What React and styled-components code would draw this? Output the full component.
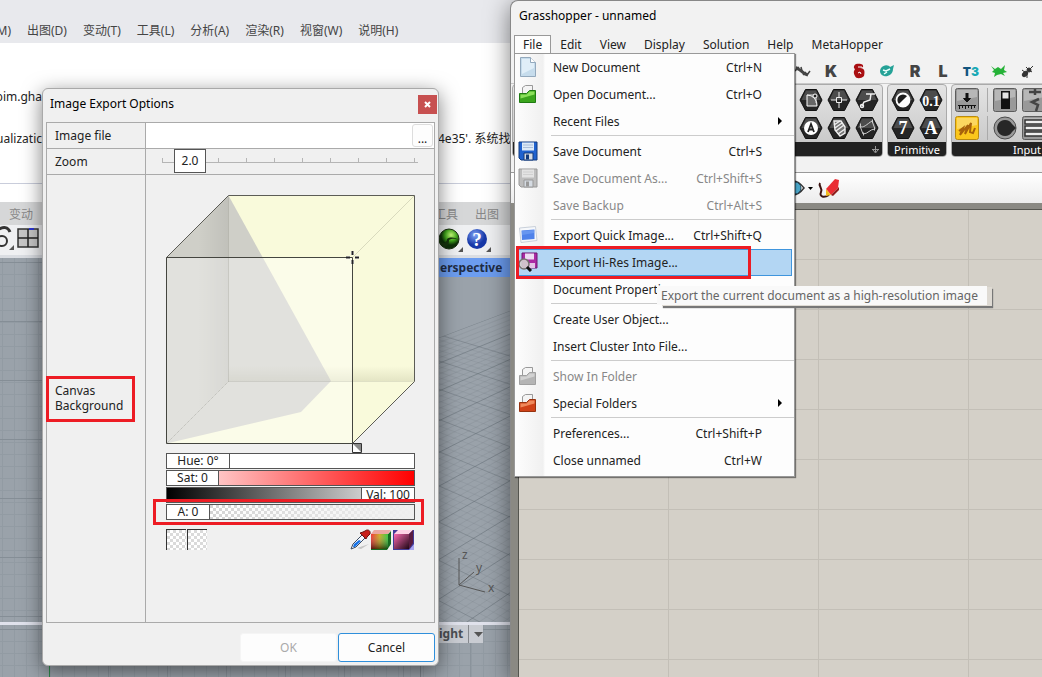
import styled, { createGlobalStyle, css } from "styled-components";

const fileMenu = [
  [
    { label: "New Document", keys: "Ctrl+N", icon: "page" },
    { label: "Open Document...", keys: "Ctrl+O", icon: "green" },
    { label: "Recent Files", sub: true },
  ],
  [
    { label: "Save Document", keys: "Ctrl+S", icon: "save" },
    { label: "Save Document As...", keys: "Ctrl+Shift+S", icon: "saveGray", off: true },
    { label: "Save Backup", keys: "Ctrl+Alt+S", off: true },
  ],
  [
    { label: "Export Quick Image...", keys: "Ctrl+Shift+Q", icon: "quick" },
    { label: "Export Hi-Res Image...", icon: "hires", active: true },
    { label: "Document Properties..." },
  ],
  [{ label: "Create User Object..." }, { label: "Insert Cluster Into File..." }],
  [
    { label: "Show In Folder", icon: "gray", off: true },
    { label: "Special Folders", icon: "orange", sub: true },
  ],
  [
    { label: "Preferences...", keys: "Ctrl+Shift+P" },
    { label: "Close unnamed", keys: "Ctrl+W" },
  ],
];

const folderColors = {
  green: ["#8be05a", "#3ba51d", "#1f7a12"],
  gray: ["#d2d2d2", "#b4b4b4", "#a0a0a0"],
  orange: ["#ef8a5c", "#cf4218", "#96320f"],
};

const Floppy = ({ main, dark, plate }) => (
  <g>
    <path d="M1 1h18v18H3l-2-2z" fill={main} stroke={dark} />
    <path d="M4 1.500h12v8H4z" fill={plate} />
    <path d="M5 4h10M5 6.500h10" stroke={dark} strokeOpacity=".25" />
    <path d="M6 12h9v7H6z" fill="#d5dbe2" stroke={dark} />
    <path d="M8 13.500h3v5H8z" fill={dark} />
  </g>
);

const MenuIcon = ({ name }) => {
  if (name === "page") {
    return (
      <svg width="20" height="20" viewBox="0 0 20 20">
        <path d="M2.500.5h10l5 5v14h-15z" fill="#c6dcec" stroke="#93a9bd" />
        <path d="M4 2h8v4h4v5L4 17z" fill="#e0eef8" />
        <path d="M12.500.5v5h5" fill="#fff" stroke="#93a9bd" />
      </svg>
    );
  }
  if (name === "save" || name === "saveGray") {
    return (
      <svg width="20" height="20" viewBox="0 0 20 20">
        {name === "save" ? (
          <Floppy main="#1f62cf" dark="#123a7c" plate="#dceaf8" />
        ) : (
          <Floppy main="#bdbdbd" dark="#999" plate="#e3e3e3" />
        )}
      </svg>
    );
  }
  if (name === "quick") {
    return (
      <svg width="20" height="20" viewBox="0 0 20 20">
        <path d="M1.500 3l16-1.500 1.500 14-16 2z" fill="#f6f8fb" stroke="#c9d0da" strokeLinejoin="round" />
        <path d="M3.500 5.500l13-1v9.500l-12.500 1z" fill="#4f82ea" />
        <path d="M4 6l12-1v3L4 10z" fill="#6796f0" />
      </svg>
    );
  }
  if (name === "hires") {
    return (
      <svg width="20" height="20" viewBox="0 0 20 20">
        <path d="M4 1h15v15H6l-2-2z" fill="#ab2aa4" stroke="#6d1770" />
        <path d="M7 1.500h9v6H7z" fill="#eedcf2" />
        <path d="M10 11h7v5h-7z" fill="#e4c3e6" />
        <circle cx="6" cy="12" r="5" fill="#d5d2cf" fillOpacity=".9" stroke="#77716f" strokeWidth="1.500" />
        <path d="M9 15l4 4" stroke="#111" strokeWidth="3" />
      </svg>
    );
  }
  const [light, base, edge] = folderColors[name];
  return (
    <svg width="20" height="20" viewBox="0 0 20 20">
      <path d="M4.500 9V3.500l3-2h7v8" fill="#f4f4f4" stroke="#999" />
      <path d="M1.500 9.500h7l3-3h6v12h-16z" fill={base} stroke={edge} />
      <path d="M2.500 10.500h6l3-3h5v3l-14 4z" fill={light} />
    </svg>
  );
};

const CubePicker = () => (
  <Cube viewBox="160 188 262 266" aria-label="Colour cube">
    <defs>
      <linearGradient id="floorShade" x1="0" y1="0" x2="0" y2="1">
        <stop offset="0" stopColor="#77774f" stopOpacity="0" />
        <stop offset="1" stopColor="#77774f" stopOpacity=".16" />
      </linearGradient>
      <linearGradient id="wallShade" x1="0" y1="0" x2="1" y2="0">
        <stop offset="0" stopColor="#000" stopOpacity="0" />
        <stop offset="1" stopColor="#000" stopOpacity=".07" />
      </linearGradient>
    </defs>
    <path d="M228.500 195.500H414.500V381.500L352.500 443.500H166.500V257.500Z" fill="#f9fadb" />
    <path d="M228.500 195.500L331 381L301 412L166.500 443.500V257.500Z" fill="#cfcfc8" />
    <path d="M228.500 366H414.500V381H228.500Z" fill="url(#floorShade)" />
    <path d="M198 226L228.500 195.500V381L198 411Z" fill="url(#wallShade)" />
    <path d="M166.500 257.500H352.500V443.500H166.500Z" fill="#fff" fillOpacity=".38" />
    <path d="M228.500 195.500V381.500H414.500M228.500 381.500L166.500 443.500" fill="none" stroke="#77776d" strokeOpacity=".4" strokeDasharray="1 1" />
    <path d="M414.500 195.500L352.500 257.500" stroke="#d9dabd" />
    <path d="M166.500 257.500L228.500 195.500H414.500V381.500L352.500 443.500" fill="none" stroke="#5c5c56" />
    <path d="M166.500 257.500H352.500V443.500H166.500Z" fill="none" stroke="#44453f" />
    <path d="M352.500 251v4M352.500 260v4M346 257.500h4M355 257.500h4" stroke="#fff" strokeWidth="3" />
    <path d="M352.500 251v4M352.500 260v4M346 257.500h4M355 257.500h4" stroke="#222" strokeWidth="2" />
    <path d="M352.500 443.500h9v9h-9z" fill="#fff" stroke="#333" />
    <path d="M353 444h8v8z" fill="#8a8a8a" />
  </Cube>
);

const ColorTools = () => (
  <svg width="66" height="22" viewBox="0 0 66 22">
    <defs>
      <linearGradient id="rg" x1="0" y1="0" x2="1" y2="0">
        <stop offset="0" stopColor="#f01f1f" />
        <stop offset=".5" stopColor="#c8a410" />
        <stop offset="1" stopColor="#22c42c" />
      </linearGradient>
      <linearGradient id="darken" x1="0" y1="0" x2="0" y2="1">
        <stop offset="0" stopColor="#fff" stopOpacity=".1" />
        <stop offset="1" stopColor="#000" stopOpacity=".6" />
      </linearGradient>
      <linearGradient id="pink" x1="0" y1="0" x2="1" y2="1">
        <stop offset="0" stopColor="#f868ae" />
        <stop offset="1" stopColor="#1d0614" />
      </linearGradient>
    </defs>
    <path d="M8 19l12-4-8 5z" fill="#c4c4c4" />
    <path d="M2 20l2-5 9-9 3 3-9 9z" fill="#f3f8ff" stroke="#3c4a60" />
    <path d="M4 18l1-3 5-4 2 1-6 6z" fill="#1672e8" />
    <path d="M11 4l6 6 1-2 3-3c1-4-3-5-5-3l-2 1z" fill="#c8201c" stroke="#6d1210" />
    <path d="M39 5l3-3v13l-4 6H22v-1h17z" fill="#166c22" />
    <path d="M22 5l3-4h17l-3 4z" fill="#eba6a0" />
    <path d="M22 5h17v15H22z" fill="url(#rg)" />
    <path d="M22 5h17v15H22z" fill="url(#darken)" />
    <path d="M44 1h21v20H44z" fill="#413a97" />
    <path d="M45 5l4-4h15l-4 4z" fill="#ffd2e6" />
    <path d="M45 5h15v15H45z" fill="url(#pink)" />
    <path d="M60 5l4-4v13l-4 6z" fill="#5a1c40" />
    <path d="M65 21h-5l5-6z" fill="#a9a5f2" />
  </svg>
);

const hexGlyphs = {
  shape: (
    <g>
      <path d="M8 7v11h10a10 10 0 0 0-10-11z" fill="#666" stroke="#fff" />
      <path d="M8 7h8M17 7v8" stroke="#ddd" />
      <circle cx="16" cy="8" r="2" fill="#222" stroke="#fff" />
    </g>
  ),
  point: <path d="M12 4v5M12 15v5M4 12h5M15 12h5M9.500 9.500h5v5h-5z" fill="none" stroke="#eee" />,
  vector: (
    <g fill="none" stroke="#eee" strokeWidth="1.500">
      <path d="M7 18l2-4 6-2 1-6M11 6h9" />
      <circle cx="7" cy="18" r="1.500" />
    </g>
  ),
  letter: (
    <g>
      <circle cx="12" cy="12" r="7" fill="#fff" />
      <path d="M9 16l3-8 3 8M10 13.500h4" fill="none" stroke="#222" strokeWidth="1.800" />
    </g>
  ),
  hatch: (
    <g stroke="#eee" strokeWidth="1.400">
      <path d="M7 5h7l4 6v6l-5 3-5-6z" fill="#777" />
      <path d="M7 9l6-4M8 12l7-5M9 15l8-6M11 18l7-5" />
    </g>
  ),
  surface: (
    <g fill="none" stroke="#ccc">
      <path d="M5 10c3 3 7-2 12-5l3 8c-5 0-7 5-12 5z" />
      <path d="M5 9h1M17 5h1M19 13h1M8 18h1" strokeWidth="3" />
    </g>
  ),
  bool: (
    <g>
      <circle cx="12" cy="12" r="6.500" fill="#1d1d1d" stroke="#fff" strokeWidth="1.800" />
      <path d="M16.600 7.400a6.500 6.500 0 0 1-9.200 9.200z" fill="#fff" />
    </g>
  ),
};

const Hex = ({ glyph, text }) => (
  <IconButton type="button" aria-label={glyph || text}>
    <svg width="24" height="24" viewBox="0 0 24 24">
      <path d="M6.500 1.500h11L23 12l-5.500 10.500h-11L1 12z" fill="#252525" stroke="#111" />
      <path d="M7 2.500h10L21.500 12h-19z" fill="#4c4c4c" />
      {glyph && hexGlyphs[glyph]}
      {text && (
        <text x="12" y="18" textAnchor="middle" fontFamily="Liberation Serif, serif" fontWeight="700" fontSize={text.length > 1 ? 14 : 18} fill="#fff">
          {text}
        </text>
      )}
    </svg>
  </IconButton>
);

const Tile = ({ kind }) => (
  <IconButton type="button" aria-label={kind}>
    <svg width="24" height="24" viewBox="0 0 24 24">
      {kind !== "knob" && (
        <rect x=".5" y=".5" width="23" height="23" rx="2" fill={kind === "graph" ? "#fbc61c" : "#999"} stroke={kind === "graph" ? "#b98a10" : "#5c5c5c"} />
      )}
      {kind !== "knob" && <path d="M2 2h20v7L2 13z" fill="#fff" fillOpacity=".3" />}
      {kind === "import" && (
        <g fill="#111" stroke="#111">
          <path d="M12 5v6" strokeWidth="3" />
          <path d="M8.500 10.500h7L12 14z" />
          <path d="M3 17.500h18M4.500 17v4M7.500 17v3M10.500 17v4M13.500 17v3M16.500 17v4M19.500 17v3" />
        </g>
      )}
      {kind === "graph" && <path d="M4 15l4-3-3 7 8-10-3 9 6-11-1 9 3 1 2-5" fill="none" stroke="#a8620b" strokeWidth="2" />}
      {kind === "toggle" && (
        <g>
          <path d="M8 3h9v18H8z" fill="#111" />
          <path d="M9.500 4.500h6v6h-6z" fill="#e4e4e4" />
        </g>
      )}
      {kind === "knob" && (
        <g>
          <circle cx="12" cy="12" r="11" fill="#9a9a9a" stroke="#4c4c4c" />
          <path d="M12 4a8 8 0 1 0 7 12l4-4-4-4a8 8 0 0 0-7-4z" fill="#272727" />
        </g>
      )}
      {kind === "digits" && <path d="M7 4h12M13 1v6M17 11l-7 3 6 3-2 6" fill="none" stroke="#444" strokeWidth="2.500" />}
      {kind === "list" && <path d="M3 4h19v4H3zM3 10h19v4H3zM3 16h19v4H3z" fill="#eee" stroke="#333" strokeWidth="1.500" />}
    </svg>
  </IconButton>
);

const TabArt = ({ kind }) => (
  <svg width="18" height="18" viewBox="0 0 18 18">
    {kind === "hopper" && (
      <g fill="none" stroke="#444">
        <path d="M2 6l4 2 5 4 3 1" strokeWidth="3" />
        <path d="M1 9l4-4M7 5l1 4M9 13l3-3M13 13l3-4M2 5l3 1" strokeWidth="1.500" />
      </g>
    )}
    {kind === "kangaroo" && <path d="M6 2c4-1 8 0 7 3l-3 1c5 0 5 4 4 8-3 3-8 3-9 0-2-4-1-5 0-7-2-1-1-4 1-5z" fill="#a90f12" />}
    {kind === "kangaroo" && <path d="M8 5h4M8 11l2-1 1 2" fill="none" stroke="#fff" />}
    {kind === "teal" && <path d="M3 6c3-4 8-3 9-1l4-2-1 4c0 6-6 8-9 7-4-1-5-5-3-8z" fill="#25a297" />}
    {kind === "teal" && <path d="M5 8l3 1 4-2M6 12l3-2" fill="none" stroke="#e9fffb" strokeWidth="1.500" />}
    {kind === "lizard" && <path d="M1 4l4 3 3-2 3 2 4-4-1 5 3 2-4 1 2 3-4-2-4 1-3 2 1-4-3-1 2-2z" fill="#25b237" />}
    {kind === "ant" && (
      <g fill="#333" stroke="#333">
        <ellipse cx="7" cy="12" rx="3" ry="2" transform="rotate(-45 7 12)" />
        <circle cx="11" cy="8" r="2" />
        <path d="M11 8l4-4M8 5l3 3M14 10l-3-2M4 8l4 3M9 16V12" fill="none" />
      </g>
    )}
  </svg>
);

const PerspectiveGrid = () => {
  const lines = [];
  for (let i = 0; i < 64; i++) {
    const y = 60 + i * 5 + i * i * 0.04;
    const strong = i % 5 === 0;
    lines.push(<path key={`a${i}`} d={`M0 ${y + 4}L90 ${y - 30 - i * 0.6}`} strokeOpacity={strong ? 0.5 : 0.15} />);
    lines.push(<path key={`b${i}`} d={`M0 ${y - 5}L90 ${y + 22 + i * 0.5}`} strokeOpacity={strong ? 0.4 : 0.13} />);
  }
  return (
    <Scene viewBox="0 0 80 345" preserveAspectRatio="xMinYMin slice">
      <clipPath id="ground">
        <path d="M0 64L90 30V345H0z" />
      </clipPath>
      <g clipPath="url(#ground)" fill="none" stroke="#626b73">
        {lines}
      </g>
      <path d="M29 308V281M29 308L44 295M29 308L55 315" fill="none" stroke="#555" />
      <g fontFamily="Noto Sans, sans-serif" fontSize="12" fill="#555">
        <text x="32" y="282">z</text>
        <text x="46" y="295">y</text>
        <text x="58" y="315">x</text>
      </g>
    </Scene>
  );
};

const Rhino = () => (
  <RhinoWindow>
    <RhinoMenu>
      {["M)", "出图(D)", "变动(T)", "工具(L)", "分析(A)", "渲染(R)", "视窗(W)", "说明(H)"].map((t) => (
        <PlainButton type="button" key={t}>{t}</PlainButton>
      ))}
    </RhinoMenu>
    <Console>
      <ConsoleLine>
        <LineStart>bim.gha</LineStart>
      </ConsoleLine>
      <ConsoleLine>
        <LineStart>ualizatic</LineStart>
        <span>4e35'. 系统找</span>
      </ConsoleLine>
      <Prompt />
    </Console>
    <RhinoTabs>
      <TabStart>变动</TabStart>
      <span>工具</span>
      <span>出图</span>
    </RhinoTabs>
    <RhinoTools>
      <ToolStart>
        <svg width="42" height="28" viewBox="0 0 42 28">
          <path d="M-3 5c7-4 11-3 13 2" fill="none" stroke="#333" strokeWidth="3" />
          <circle cx="2" cy="16" r="5" fill="none" stroke="#333" strokeWidth="2" />
          <path d="M14 20v5H9z" fill="#555" />
          <path d="M18 4h20v18H18z" fill="#c6c6c6" stroke="#333" strokeWidth="1.500" />
          <path d="M28 4v18M18 13h20" stroke="#222" strokeWidth="1.500" />
          <path d="M29 4h5" stroke="#2b35d1" strokeWidth="2" />
        </svg>
      </ToolStart>
      <svg width="56" height="28" viewBox="0 0 56 28">
        <defs>
          <radialGradient id="ball" cx=".6" cy=".3">
            <stop offset="0" stopColor="#c8ff7a" />
            <stop offset=".6" stopColor="#3fa51c" />
            <stop offset="1" stopColor="#0d2f08" />
          </radialGradient>
          <radialGradient id="help" cx=".4" cy=".3">
            <stop offset="0" stopColor="#7ea3f5" />
            <stop offset="1" stopColor="#1738a8" />
          </radialGradient>
        </defs>
        <circle cx="12" cy="14" r="10" fill="url(#ball)" stroke="#1a2d12" />
        <path d="M2 15c4 5 8 3 8-1 3-2 8-2 11 1-3-2-7-1-9 0 0 5-2 7-6 7-3-2-4-4-4-7z" fill="#16330d" />
        <path d="M26 22v5h-5zM54 22v5h-5z" fill="#555" />
        <circle cx="40" cy="14" r="10" fill="url(#help)" />
        <text x="40" y="21" textAnchor="middle" fontFamily="Liberation Serif, serif" fontWeight="700" fontSize="19" fill="#fff">?</text>
      </svg>
    </RhinoTools>
    <Viewports>
      <Viewport />
      <Viewport $plain>
        <ViewTitle>erspective</ViewTitle>
        <PerspectiveGrid />
      </Viewport>
    </Viewports>
    <BottomViews>
      <Viewport><GreenAxis /></Viewport>
      <Viewport>
        <ViewTag>
          ight<i />
          <svg width="9" height="5" viewBox="0 0 9 5"><path d="M0 0h9L4.500 5z" fill="#555" /></svg>
        </ViewTag>
      </Viewport>
    </BottomViews>
  </RhinoWindow>
);

const ExportDialog = () => {
  const zoom = 2;
  return (
    <Dialog role="dialog" aria-label="Image Export Options">
      <DialogTitle>
        <span>Image Export Options</span>
        <CloseButton type="button" aria-label="Close">
          <svg width="7" height="7" viewBox="0 0 7 7"><path d="M1 1l5 5M6 1L1 6" stroke="#fff" strokeWidth="2" /></svg>
        </CloseButton>
      </DialogTitle>
      <Properties>
        <PropLabel htmlFor="imageFile">Image file</PropLabel>
        <FileCell>
          <FileInput id="imageFile" />
          <BrowseButton type="button">...</BrowseButton>
        </FileCell>
        <PropLabel htmlFor="zoom">Zoom</PropLabel>
        <ZoomCell>
          <ZoomTrack>
            <ZoomInput id="zoom" type="range" min="1" max="10" defaultValue={zoom} />
            <ZoomValue htmlFor="zoom" style={{ left: `${zoom * 6}px` }}>2.0</ZoomValue>
          </ZoomTrack>
        </ZoomCell>
        <CanvasLabel>
          <Marked>Canvas<br />Background</Marked>
        </CanvasLabel>
        <ColorCell>
          <CubePicker />
          <Channels>
            <Channel>
              <ChannelLabel htmlFor="hue" $w={62}>Hue: 0°</ChannelLabel>
              <ChannelInput id="hue" type="range" $fill="#fff" />
            </Channel>
            <Channel>
              <ChannelLabel htmlFor="sat" $w={51}>Sat: 0</ChannelLabel>
              <ChannelInput id="sat" type="range" $fill="linear-gradient(90deg, #ffc4c4, #f00)" />
            </Channel>
            <Channel $reverse>
              <ChannelLabel htmlFor="val" $w={52}>Val: 100</ChannelLabel>
              <ChannelInput id="val" type="range" $reverse $fill="linear-gradient(90deg, #000, #ccc)" />
            </Channel>
            <Channel>
              <ChannelLabel htmlFor="alpha" $w={42}>A: 0</ChannelLabel>
              <ChannelInput
                id="alpha"
                type="range"
                $fill="linear-gradient(90deg, #efefef00, #efefef), conic-gradient(#fff 25%, #d4d4d4 0 50%, #fff 0 75%, #d4d4d4 0) 0 0 / 6px 6px"
              />
              <AlphaMark />
            </Channel>
          </Channels>
          <SwatchRow>
            <Swatch type="button" aria-label="Old colour" />
            <Swatch type="button" aria-label="New colour" />
            <ColorTools />
          </SwatchRow>
        </ColorCell>
      </Properties>
      <DialogFooter>
        <DialogButton type="button" disabled>OK</DialogButton>
        <DialogButton type="button" $focus>Cancel</DialogButton>
      </DialogFooter>
    </Dialog>
  );
};

const FileMenu = () => (
  <Menu role="menu">
    {fileMenu.map((group, i) => (
      <MenuGroup key={i}>
        {group.map((item) => (
          <MenuItem type="button" role="menuitem" key={item.label} disabled={item.off} $active={item.active}>
            <Gutter>{item.icon && <MenuIcon name={item.icon} />}</Gutter>
            <span>{item.label}</span>
            <Keys>{item.keys}</Keys>
            <Arrow>
              {item.sub && <svg width="4" height="8" viewBox="0 0 4 8"><path d="M0 0l4 4-4 4z" fill="#000" /></svg>}
            </Arrow>
            {item.active && <ExportMark />}
            {item.active && <Tooltip role="tooltip">Export the current document as a high-resolution image</Tooltip>}
          </MenuItem>
        ))}
      </MenuGroup>
    ))}
  </Menu>
);

const Grasshopper = () => (
  <GhWindow>
    <GhTitle>Grasshopper - unnamed</GhTitle>
    <GhMenuBar>
      {["File", "Edit", "View", "Display", "Solution", "Help", "MetaHopper"].map((t) => (
        <GhMenuButton type="button" key={t} $open={t === "File"}>{t}</GhMenuButton>
      ))}
    </GhMenuBar>
    <TabStrip>
      <GhTab type="button" aria-label="Hopper"><TabArt kind="hopper" /></GhTab>
      <GhTab type="button">K</GhTab>
      <GhTab type="button" aria-label="Kangaroo"><TabArt kind="kangaroo" /></GhTab>
      <GhTab type="button" aria-label="Teal"><TabArt kind="teal" /></GhTab>
      <GhTab type="button">R</GhTab>
      <GhTab type="button">L</GhTab>
      <GhTab type="button" $small>T<b>3</b></GhTab>
      <GhTab type="button" aria-label="Lizard"><TabArt kind="lizard" /></GhTab>
      <GhTab type="button" aria-label="Ant"><TabArt kind="ant" /></GhTab>
    </TabStrip>
    <Ribbon>
      <Panel $w={371}>
        <PanelIcons $cols={3}>
          <Hex glyph="shape" /><Hex glyph="point" /><Hex glyph="vector" />
          <Hex glyph="letter" /><Hex glyph="hatch" /><Hex glyph="surface" />
        </PanelIcons>
        <PanelTitle $end>
          <svg width="7" height="7" viewBox="0 0 7 7"><path d="M3.500 0v6M0 3.500h7M1 4l2.500 3L6 4" stroke="#999" fill="none" /></svg>
        </PanelTitle>
      </Panel>
      <Panel $w={60}>
        <PanelIcons $cols={2}>
          <Hex glyph="bool" /><Hex text="0.1" />
          <Hex text="7" /><Hex text="A" />
        </PanelIcons>
        <PanelTitle>Primitive</PanelTitle>
      </Panel>
      <Panel $w={152}>
        <InputIcons>
          <Tile kind="import" /><i /><Tile kind="toggle" /><Tile kind="digits" />
          <Tile kind="graph" /><i /><Tile kind="knob" /><Tile kind="list" />
        </InputIcons>
        <PanelTitle>Input</PanelTitle>
      </Panel>
    </Ribbon>
    <CanvasBar>
      <svg width="56" height="24" viewBox="0 0 56 24">
        <path d="M0 12Q10-2 21 12Q10 26 0 12z" fill="#fff" stroke="#333" strokeWidth="1.500" />
        <circle cx="12" cy="12" r="6" fill="#48a3c5" stroke="#245" />
        <path d="M25 11h5l-2.500 3z" fill="#000" />
        <path d="M37 7c-2 3 3 5 1 9-2 5 3 6 8 3" fill="none" stroke="#3b120f" strokeWidth="2" />
        <path d="M43 13L52 3l4 1-1 8-7 7z" fill="#ea2c33" />
        <path d="M43 13l5 6-5 1z" fill="#f2b91d" />
        <path d="M48 19l8-8v3l-6 6z" fill="#8e1c1b" />
      </svg>
    </CanvasBar>
    <Canvas />
    <FileMenu />
  </GhWindow>
);

const App = () => (
  <Desktop>
    <GlobalStyle />
    <Rhino />
    <Grasshopper />
    <ExportDialog />
  </Desktop>
);

export default App;

const GlobalStyle = createGlobalStyle`
  * { box-sizing: border-box; }

  body {
    margin: 0;
    font-family: "Noto Sans", "Noto Sans CJK SC", sans-serif;
    font-size: 12px;
    color: #222;
  }

  button, input {
    font: inherit;
    color: inherit;
    margin: 0;
    padding: 0;
    border: 0;
  }

  svg { display: block; flex: none; }
`;

const redMark = css`
  border: 3px solid #ed1c24;
`;

const Desktop = styled.div`
  position: relative;
  min-height: 100vh;
  overflow: hidden;
`;

const RhinoWindow = styled.main`
  display: flex;
  flex-direction: column;
  min-height: 100vh;
  background: #9aa2aa;
  white-space: nowrap;
`;

const RhinoMenu = styled.nav`
  display: flex;
  align-items: flex-end;
  gap: 16px;
  height: 43px;
  padding-bottom: 3px;
  background: #e8e9ed;
  color: #444;
`;

const PlainButton = styled.button`
  background: none;
  line-height: 18px;

  &:first-child {
    width: 11px;
    display: flex;
    justify-content: flex-end;
  }
`;

const Console = styled.div`
  display: flex;
  flex-direction: column;
  gap: 22px;
  height: 159px;
  padding-top: 44px;
  background: #fff;
`;

const ConsoleLine = styled.div`
  display: flex;
  line-height: 20px;
`;

const Prompt = styled.div`
  height: 13px;
  border-bottom: 1px solid #c9cddb;
`;

const LineStart = styled.span`
  display: flex;
  justify-content: flex-end;
  width: 42px;
  margin-right: 396px;
`;

const RhinoTabs = styled.div`
  display: flex;
  gap: 17px;
  padding-left: 9px;
  height: 23px;
  align-items: center;
  background: #d6d7d8;
  color: #888;
`;

const TabStart = styled.span`
  flex: 0 0 408px;
`;

const RhinoTools = styled.div`
  display: flex;
  height: 33px;
  background: #eff0f2;
  border-bottom: 3px solid #dadde2;
`;

const ToolStart = styled.div`
  flex: 0 0 437px;
`;

const Viewports = styled.div`
  flex: 1;
  display: grid;
  grid-template-columns: 421px 1fr;
`;

const BottomViews = styled(Viewports)`
  flex: 0 0 55px;
  border-top: 3px solid #e0e2ec;
`;

const Viewport = styled.div`
  display: flex;
  flex-direction: column;
  background-color: #9aa2aa;
  border-right: 1px solid #7c848c;

  ${(p) => !p.$plain && css`
    background-image:
      linear-gradient(#858e96 1px, transparent 1px),
      linear-gradient(90deg, #8a939b 1px, transparent 1px),
      linear-gradient(#929ba3 1px, transparent 1px),
      linear-gradient(90deg, #929ba3 1px, transparent 1px);
    background-size: 59px 59px, 59px 59px, 12px 12px, 12px 12px;
    background-position: 0 4px, 49px 0, 0 4px, 2px 0;
  `}
`;

const GreenAxis = styled.i`
  flex: 1;
  width: 50px;
  border-right: 1px solid #2f8a4b;
`;

const ViewTitle = styled.div`
  width: 89px;
  padding-left: 19px;
  background: #6c9df0;
  color: #1f2c44;
  font-weight: 700;
  line-height: 19px;
`;

const Scene = styled.svg`
  width: 80px;
  height: 345px;
  margin-left: 9px;
`;

const ViewTag = styled.div`
  display: flex;
  align-items: center;
  gap: 5px;
  width: 62px;
  padding-left: 18px;
  background: #c9ccd2;
  color: #4c4f53;
  font-weight: 700;
  line-height: 18px;

  i {
    align-self: stretch;
    border-left: 1px solid #85888d;
  }
`;

const Dialog = styled.section`
  position: absolute;
  left: 42px;
  top: 88px;
  width: 397px;
  display: flex;
  flex-direction: column;
  padding: 0 3px;
  background: #f0f0f0;
  border: 1px solid #a9a9a9;
  border-radius: 6px;
  box-shadow: 0 5px 20px rgba(0, 0, 0, 0.5);
`;

const DialogTitle = styled.h1`
  display: flex;
  justify-content: space-between;
  margin: 0;
  height: 33px;
  padding-left: 4px;
  font-size: 12px;
  font-weight: 400;
  line-height: 30px;
  color: #000;
`;

const CloseButton = styled.button`
  display: grid;
  place-items: center;
  width: 19px;
  height: 19px;
  margin: 6px -2px 0 0;
  background: #c75050;
`;

const Properties = styled.div`
  display: grid;
  grid-template-columns: 99px minmax(0, 1fr);
  grid-template-rows: 26px 26px 447px;
  border: 1px solid #aaa;

  > * {
    border-bottom: 1px solid #aaa;
  }

  > *:nth-child(odd) {
    border-right: 1px solid #aaa;
  }

  > *:nth-last-child(-n + 2) {
    border-bottom: 0;
  }
`;

const PropLabel = styled.label`
  padding-left: 8px;
  line-height: 25px;
`;

const FileCell = styled.div`
  display: flex;
  background: #fff;
`;

const FileInput = styled.input`
  flex: 1;
  min-width: 0;
  background: #fff;
`;

const BrowseButton = styled.button`
  width: 21px;
  margin: 1px;
  padding-top: 5px;
  background: #fdfdfd;
  border: 1px solid #ddd;
  border-radius: 3px;
`;

const ZoomCell = styled.div`
  padding: 0 16px;
`;

const ZoomTrack = styled.div`
  position: relative;
  height: 25px;
`;

const ZoomInput = styled.input`
  display: block;
  appearance: none;
  width: 100%;
  height: 14px;
  background:
    linear-gradient(#b5b5b5, #b5b5b5) 0 100% / 100% 1px no-repeat,
    repeating-linear-gradient(90deg, #b5b5b5 0 1px, transparent 1px 28px) 0 100% / 100% 5px no-repeat;

  &::-webkit-slider-thumb {
    appearance: none;
    width: 0;
  }
`;

const ZoomValue = styled.output`
  position: absolute;
  top: 0;
  width: 32px;
  height: 24px;
  line-height: 21px;
  text-align: center;
  background: #fff;
  border: 1px solid #555;
`;

const CanvasLabel = styled.div`
  display: flex;
  align-items: center;
`;

const Marked = styled.div`
  ${redMark}
  width: 89px;
  margin-left: -1px;
  padding: 4px 6px 6px;
  line-height: 15px;
`;

const ColorCell = styled.div`
  padding: 13px 10px 0 14px;
`;

const Cube = styled.svg`
  width: 262px;
  height: 266px;
`;

const Channels = styled.div`
  display: grid;
  gap: 1px;
  width: 249px;
  margin: -1px 0 0 6px;
`;

const Channel = styled.div`
  position: relative;
  display: flex;
  flex-direction: ${(p) => (p.$reverse ? "row-reverse" : "row")};
  height: 16px;
  border: 1px solid #555;
  background: #fff;
`;

const ChannelLabel = styled.label`
  flex: 0 0 ${(p) => p.$w}px;
  line-height: 14px;
  text-align: center;
  background: #fff;
`;

const ChannelInput = styled.input`
  appearance: none;
  flex: 1;
  min-width: 0;
  background: ${(p) => p.$fill};
  border: solid #555;
  border-width: ${(p) => (p.$reverse ? "0 1px 0 0" : "0 0 0 1px")};

  &::-webkit-slider-thumb {
    appearance: none;
    width: 0;
  }
`;

const AlphaMark = styled.i`
  ${redMark}
  position: absolute;
  inset: -6px -10px -6px -14px;
  pointer-events: none;
`;

const SwatchRow = styled.div`
  display: flex;
  gap: 1px;
  width: 249px;
  margin: 9px 0 0 6px;

  > svg {
    margin-left: auto;
  }
`;

const Swatch = styled.button`
  width: 20px;
  height: 21px;
  border: solid #333;
  border-width: 1px 0 0 1px;
  background: conic-gradient(#fff 25%, #dadada 0 50%, #fff 0 75%, #dadada 0) 0 0 / 6px 6px;
`;

const DialogFooter = styled.footer`
  display: flex;
  justify-content: flex-end;
  gap: 1px;
  padding: 10px 0 3px;
`;

const DialogButton = styled.button`
  width: 97px;
  height: 29px;
  background: #fdfdfd;
  border: 1px solid ${(p) => (p.$focus ? "#2f8fdb" : "#f5f5f5")};
  border-radius: 3px;

  &:disabled {
    color: #aaa;
  }
`;

const GhWindow = styled.section`
  position: absolute;
  inset: 0 0 0 510px;
  display: flex;
  flex-direction: column;
  background: #f2f2f2;
  border: solid #888;
  border-width: 1px 0 0 1px;
  border-radius: 8px 0 0 0;
  box-shadow: 0 4px 24px rgba(0, 0, 0, 0.5);
  white-space: nowrap;
`;

const GhTitle = styled.h1`
  margin: 0;
  padding-left: 8px;
  font-size: 12px;
  font-weight: 400;
  line-height: 30px;
  height: 34px;
  color: #000;
`;

const GhMenuBar = styled.nav`
  display: flex;
  padding-left: 3px;
`;

const GhMenuButton = styled.button`
  height: 19px;
  padding: 0 8px;
  line-height: 18px;
  border: 1px solid transparent;
  border-bottom: 0;
  background: none;

  ${(p) => p.$open && css`
    background: #fdfdfd;
    border-color: #999;
  `}
`;

const TabStrip = styled.div`
  display: flex;
  height: 30px;
  padding: 5px 0 0 278px;
  overflow: hidden;
  border-bottom: 1px solid #c8c8c8;
`;

const GhTab = styled.button`
  flex: 0 0 28px;
  display: flex;
  align-items: center;
  justify-content: center;
  background: none;
  font: 900 ${(p) => (p.$small ? 12 : 16)}px Inter, sans-serif;
  color: ${(p) => (p.$small ? "#12557e" : "#444")};

  b {
    color: #18a9b5;
  }
`;

const Ribbon = styled.div`
  display: flex;
  gap: 4px;
  height: 88px;
  padding: 0 0 15px 1px;
  overflow: hidden;
`;

const Panel = styled.div`
  flex: 0 0 ${(p) => p.$w}px;
  display: flex;
  flex-direction: column;
  justify-content: space-between;
  overflow: hidden;
  border: 1px solid #aaa;
  border-radius: 4px;
  background: linear-gradient(#e4e4e4, #c4c4c4);
`;

const PanelIcons = styled.div`
  display: grid;
  grid-template-columns: repeat(${(p) => p.$cols}, 24px);
  justify-content: end;
  gap: 4px;
  padding: 3px 3px 0 0;
`;

const InputIcons = styled.div`
  display: grid;
  grid-template-columns: 24px 4px 24px 24px;
  gap: 4px 5px;
  padding: 3px 0 0 3px;

  i {
    border-right: 1px solid #aaa;
  }
`;

const IconButton = styled.button`
  width: 24px;
  height: 24px;
  background: none;
`;

const PanelTitle = styled.div`
  display: flex;
  align-items: center;
  justify-content: ${(p) => (p.$end ? "flex-end" : "center")};
  height: 14px;
  padding: 0 ${(p) => (p.$end ? 3 : 0)}px;
  background: #222;
  color: #fff;
  font-size: 11px;
`;

const CanvasBar = styled.div`
  display: flex;
  align-items: center;
  height: 31px;
  padding-left: 272px;
  background: linear-gradient(#fff, #ececec);
  border-top: 1px solid #999;
`;

const Canvas = styled.div`
  flex: 1;
  border: solid #8a8983;
  border-width: 6px 0 0 7px;
  background-color: #d4d0c8;
  background-image:
    linear-gradient(#c3bfb7 1px, transparent 1px),
    linear-gradient(90deg, #c3bfb7 1px, transparent 1px);
  background-size: 100% 50px, 150px 100%;
  background-position: 0 0, 0 0;
  box-shadow: inset 1px 1px 0 #55554f;
`;

const Menu = styled.div`
  position: absolute;
  left: 3px;
  top: 52px;
  width: 281px;
  padding-bottom: 2px;
  background: linear-gradient(90deg, #fdfdfd, #f0f0f0 28px, #fdfdfd 30px);
  border: 1px solid #999;
  box-shadow: 1px 1px 1px rgba(0, 0, 0, 0.45);
`;

const MenuGroup = styled.div`
  & + & {
    padding-top: 3px;
    background: linear-gradient(#ccc, #ccc) 100% 0 / 243px 1px no-repeat;
  }
`;

const MenuItem = styled.button`
  position: relative;
  display: flex;
  align-items: center;
  width: 275px;
  height: 27px;
  margin-left: 2px;
  padding-bottom: 1px;
  text-align: left;
  background: none;
  border: 1px solid transparent;

  &:disabled {
    color: #888;
  }

  ${(p) => p.$active && css`
    z-index: 1;
    background: #b3d6f3;
    border-color: #3f95dd;
  `}
`;

const Gutter = styled.span`
  flex: 0 0 35px;
`;

const Keys = styled.span`
  margin-left: auto;
`;

const Arrow = styled.span`
  flex: 0 0 29px;
  padding-left: 16px;
`;

const ExportMark = styled.i`
  ${redMark}
  position: absolute;
  inset: -4px 40px -4px -2px;
`;

const Tooltip = styled.span`
  position: absolute;
  left: 139px;
  top: 36px;
  padding: 0 9px 0 4px;
  line-height: 19px;
  background: #f9f9f9;
  color: #666;
  box-shadow: 5px 1px 0 #dedad3, 6px 3px 1px #777;
`;
